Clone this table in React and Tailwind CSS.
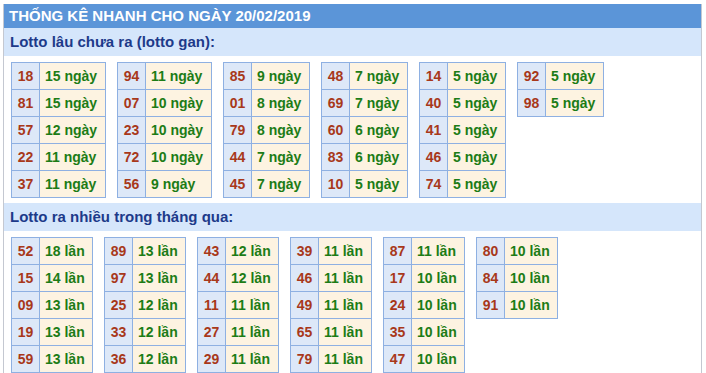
import React from 'react';

const gan = [
    [['18', '15'], ['81', '15'], ['57', '12'], ['22', '11'], ['37', '11']],
    [['94', '11'], ['07', '10'], ['23', '10'], ['72', '10'], ['56', '9']],
    [['85', '9'], ['01', '8'], ['79', '8'], ['44', '7'], ['45', '7']],
    [['48', '7'], ['69', '7'], ['60', '6'], ['83', '6'], ['10', '5']],
    [['14', '5'], ['40', '5'], ['41', '5'], ['46', '5'], ['74', '5']],
    [['92', '5'], ['98', '5']],
];

const nhieu = [
    [['52', '18'], ['15', '14'], ['09', '13'], ['19', '13'], ['59', '13']],
    [['89', '13'], ['97', '13'], ['25', '12'], ['33', '12'], ['36', '12']],
    [['43', '12'], ['44', '12'], ['11', '11'], ['27', '11'], ['29', '11']],
    [['39', '11'], ['46', '11'], ['49', '11'], ['65', '11'], ['79', '11']],
    [['87', '11'], ['17', '10'], ['24', '10'], ['35', '10'], ['47', '10']],
    [['80', '10'], ['84', '10'], ['91', '10']],
];

function valueWidth(rows, unit) {
    if (unit === 'lần') return 'w-[52px]';
    return rows.some(([, c]) => c.length > 1) ? 'w-[65px]' : 'w-[57px]';
}

function StatTable({ rows, unit }) {
    const w = valueWidth(rows, unit);
    return (
        <div className="flex flex-col border border-[#8eb0e2]">
            {rows.map(([num, count], i) => (
                <div key={num} className={`flex h-[26px] box-content ${i > 0 ? 'border-t border-[#8eb0e2]' : ''}`}>
                    <div className="w-[28px] flex items-center justify-center bg-[#dde8f8] text-[#a8381a] border-r border-[#8eb0e2]">
                        {num}
                    </div>
                    <div className={`${w} flex items-center pl-[5px] bg-[#fdf3e1] text-[#1c7c16] whitespace-nowrap`}>
                        {count} {unit}
                    </div>
                </div>
            ))}
        </div>
    );
}

function Section({ title, tables, unit }) {
    return (
        <div>
            <div className="h-[28px] flex items-center pl-[6px] bg-[#d5e6fb] text-[#1d3a8a] text-[15px] font-bold">
                {title}
            </div>
            <div className="flex items-start gap-[11px] pl-[7px] pt-[6px] pb-[5px] text-[14px] font-bold">
                {tables.map((rows, i) => (
                    <StatTable key={i} rows={rows} unit={unit} />
                ))}
            </div>
        </div>
    );
}

export default function App() {
    return (
        <div className="w-[706px] h-[373px] bg-white pt-[4px] font-['Liberation_Sans',Arial,sans-serif]">
            <div className="ml-[3px] w-[699px] h-[369px] border-x border-[#c4c8d1]">
                <div className="h-[24px] flex items-center pl-[5px] bg-[#5b95d8] text-white text-[15px] font-bold">
                    THỐNG KÊ NHANH CHO NGÀY 20/02/2019
                </div>
                <Section title="Lotto lâu chưa ra (lotto gan):" tables={gan} unit="ngày" />
                <Section title="Lotto ra nhiều trong tháng qua:" tables={nhieu} unit="lần" />
            </div>
        </div>
    );
}
